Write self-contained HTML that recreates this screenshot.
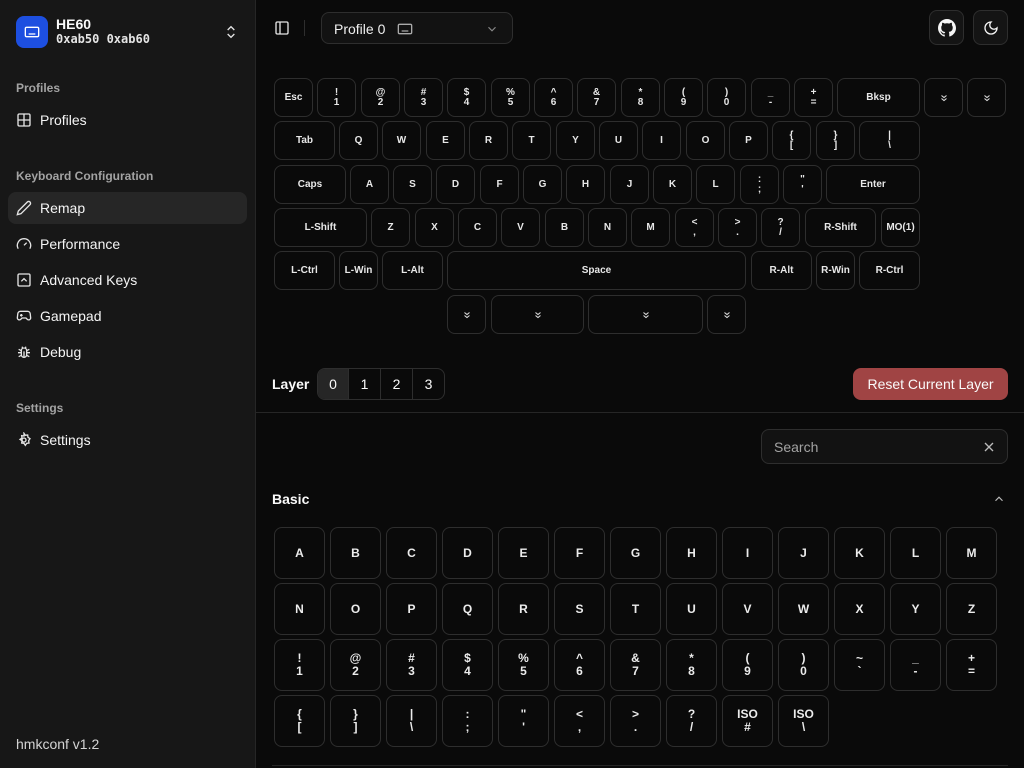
<!DOCTYPE html>
<html><head><meta charset="utf-8"><style>
*{box-sizing:border-box;margin:0;padding:0}
body{width:1024px;height:768px;overflow:hidden;background:#0a0a0a;font-family:"Liberation Sans",sans-serif;color:#fafafa;position:relative}
.sb{position:absolute;left:0;top:0;width:256px;height:768px;background:#171717;border-right:1px solid #262626}
.abs{position:absolute}
.lbl{position:absolute;left:16px;font-size:12px;color:#a3a3a3;font-weight:bold}
.item{position:absolute;left:8px;width:239px;height:32px;border-radius:8px;font-size:14px;display:flex;align-items:center;padding-left:32px;color:#f5f5f5}
.item svg{position:absolute;left:8px;top:8px}
.k{position:absolute;height:39px;border:1px solid #2e2e2e;border-radius:8px;display:flex;align-items:center;justify-content:center;text-align:center;font-size:10px;font-weight:bold;line-height:10px;color:#e8e8e8}
.g{position:absolute;left:274px;top:527px;display:grid;grid-template-columns:repeat(13,51px);grid-auto-rows:52px;gap:4px 5px}
.g div{border:1px solid #2e2e2e;border-radius:8px;display:flex;align-items:center;justify-content:center;text-align:center;font-size:12px;font-weight:bold;line-height:13px;color:#ececec}
</style></head><body>
<svg width="0" height="0" style="position:absolute"><defs><symbol id="dc" viewBox="0 0 10 10"><path d="M2.5 2.5l2.5 2 2.5-2M2.5 5.5l2.5 2 2.5-2" fill="none" stroke="#ddd" stroke-width="1.1"/></symbol></defs></svg>
<div class="sb">
 <div class="abs" style="left:16px;top:16px;width:32px;height:32px;border-radius:8px;background:#1d4fe0;display:flex;align-items:center;justify-content:center">
  <svg width="16" height="16" viewBox="0 0 24 24" fill="none" stroke="#fff" stroke-width="2"><rect x="2" y="5" width="20" height="14" rx="2"/><path d="M7 15h10M6 9h.01M10 9h.01M14 9h.01M18 9h.01"/></svg></div>
 <div class="abs" style="left:56px;top:16px;font-size:14px;font-weight:bold">HE60</div>
 <div class="abs" style="left:56px;top:32px;font-size:12px;font-family:'DejaVu Sans Mono',monospace;font-weight:bold;color:#e5e5e5">0xab50 0xab60</div>
 <svg class="abs" style="left:223px;top:24px" width="16" height="16" viewBox="0 0 24 24" fill="none" stroke="#e5e5e5" stroke-width="2"><path d="M7 15l5 5 5-5M7 9l5-5 5 5"/></svg>
 <div class="lbl" style="top:81px">Profiles</div>
 <div class="item" style="top:104px"><svg width="16" height="16" viewBox="0 0 24 24" fill="none" stroke="#e5e5e5" stroke-width="2"><rect x="3" y="3" width="18" height="18" rx="2"/><path d="M3 12h18M12 3v18"/></svg>Profiles</div>
 <div class="lbl" style="top:169px">Keyboard Configuration</div>
 <div class="item" style="top:192px;background:#262626"><svg width="16" height="16" viewBox="0 0 24 24" fill="none" stroke="#e5e5e5" stroke-width="2"><path d="M17 3a2.8 2.8 0 0 1 4 4L7.5 20.5 2 22l1.5-5.5z"/></svg>Remap</div>
 <div class="item" style="top:228px"><svg width="16" height="16" viewBox="0 0 24 24" fill="none" stroke="#e5e5e5" stroke-width="2"><path d="M12 14l4-4M3.3 19a10 10 0 1 1 17.4 0"/></svg>Performance</div>
 <div class="item" style="top:264px"><svg width="16" height="16" viewBox="0 0 24 24" fill="none" stroke="#e5e5e5" stroke-width="2"><rect x="3" y="3" width="18" height="18" rx="2"/><path d="M8 14l4-4 4 4"/></svg>Advanced Keys</div>
 <div class="item" style="top:300px"><svg width="16" height="16" viewBox="0 0 24 24" fill="none" stroke="#e5e5e5" stroke-width="2"><path d="M6 11h4M8 9v4M15 12h.01M18 10h.01"/><path d="M17.3 5H6.7a4 4 0 0 0-4 3.6L2 15a3 3 0 0 0 5 2l2-2h6l2 2a3 3 0 0 0 5-2l-.7-6.4A4 4 0 0 0 17.3 5z"/></svg>Gamepad</div>
 <div class="item" style="top:336px"><svg width="16" height="16" viewBox="0 0 24 24" fill="none" stroke="#e5e5e5" stroke-width="2"><rect x="8" y="6" width="8" height="14" rx="4"/><path d="M12 20v-9M9 4l1 2M15 4l-1 2M3 13h5M16 13h5M4 8l4 2M20 8l-4 2M4 19l4-2M20 19l-4-2"/></svg>Debug</div>
 <div class="lbl" style="top:401px">Settings</div>
 <div class="item" style="top:424px"><svg width="16" height="16" viewBox="0 0 24 24" fill="none" stroke="#e5e5e5" stroke-width="2"><circle cx="12" cy="12" r="3"/><path d="M12 2l2 3 3.5-.5.5 3.5 3 2-2 3 .5 3.5-3.5.5-2 3-2-3-3.5-.5.5-3.5-3-2 3-2-.5-3.5 3.5.5z"/></svg>Settings</div>
 <div class="abs" style="left:16px;top:736px;font-size:14px;color:#d4d4d4">hmkconf v1.2</div>
</div>

<svg class="abs" style="left:274px;top:20px" width="16" height="16" viewBox="0 0 24 24" fill="none" stroke="#e5e5e5" stroke-width="2"><rect x="3" y="3" width="18" height="18" rx="2"/><path d="M9 3v18"/></svg>
<div class="abs" style="left:304px;top:20px;width:1px;height:16px;background:#2e2e2e"></div>
<div class="abs" style="left:321px;top:12px;width:192px;height:32px;border:1px solid #2e2e2e;border-radius:8px;background:#121212;font-size:14px;padding:8px 12px;color:#f0f0f0">Profile 0
 <svg style="position:absolute;left:75px;top:8px" width="16" height="16" viewBox="0 0 24 24" fill="none" stroke="#aaa" stroke-width="2"><rect x="2" y="5" width="20" height="14" rx="2"/><path d="M7 15h10M6 9h.01M10 9h.01M14 9h.01M18 9h.01"/></svg>
 <svg style="position:absolute;left:163px;top:9px" width="14" height="14" viewBox="0 0 24 24" fill="none" stroke="#888" stroke-width="2"><path d="M6 9l6 6 6-6"/></svg></div>
<div class="abs" style="left:929px;top:10px;width:35px;height:35px;border:1px solid #2e2e2e;border-radius:8px;background:#141414;display:flex;align-items:center;justify-content:center"><svg width="18" height="18" viewBox="0 0 16 16" fill="#f5f5f5"><path d="M8 0C3.6 0 0 3.6 0 8c0 3.5 2.3 6.5 5.5 7.6.4.1.5-.2.5-.4v-1.4c-2.2.5-2.7-1-2.7-1-.4-.9-.9-1.2-.9-1.2-.7-.5.1-.5.1-.5.8.1 1.2.8 1.2.8.7 1.2 1.9.9 2.3.7.1-.5.3-.9.5-1.1-1.8-.2-3.600-.9-3.6-4 0-.9.3-1.6.8-2.1-.1-.2-.4-1 .1-2.1 0 0 .7-.2 2.2.8.6-.2 1.3-.3 2-.3s1.4.1 2 .3c1.5-1 2.200-.8 2.2-.8.4 1.1.2 1.9.1 2.1.5.6.8 1.300.8 2.1 0 3.1-1.9 3.7-3.6 3.9.3.3.5.8.5 1.5v2.2c0 .2.1.5.6.4C13.7 14.5 16 11.5 16 8c0-4.4-3.6-8-8-8z"/></svg></div>
<div class="abs" style="left:973px;top:10px;width:35px;height:35px;border:1px solid #2e2e2e;border-radius:8px;background:#141414;display:flex;align-items:center;justify-content:center"><svg width="16" height="16" viewBox="0 0 24 24" fill="none" stroke="#f5f5f5" stroke-width="2"><path d="M12 3a6 6 0 0 0 9 9 9 9 0 1 1-9-9z"/></svg></div>

<!-- keyboard -->
<div class="k" style="left:274px;top:78px;width:39px">Esc</div>
<div class="k" style="left:317px;top:78px;width:39px">!<br>1</div>
<div class="k" style="left:361px;top:78px;width:39px">@<br>2</div>
<div class="k" style="left:404px;top:78px;width:39px">#<br>3</div>
<div class="k" style="left:447px;top:78px;width:39px">$<br>4</div>
<div class="k" style="left:491px;top:78px;width:39px">%<br>5</div>
<div class="k" style="left:534px;top:78px;width:39px">^<br>6</div>
<div class="k" style="left:577px;top:78px;width:39px">&amp;<br>7</div>
<div class="k" style="left:621px;top:78px;width:39px">*<br>8</div>
<div class="k" style="left:664px;top:78px;width:39px">(<br>9</div>
<div class="k" style="left:707px;top:78px;width:39px">)<br>0</div>
<div class="k" style="left:751px;top:78px;width:39px">_<br>-</div>
<div class="k" style="left:794px;top:78px;width:39px">+<br>=</div>
<div class="k" style="left:837px;top:78px;width:83px">Bksp</div>
<div class="k" style="left:924px;top:78px;width:39px"><svg width="10" height="10"><use href="#dc"/></svg></div>
<div class="k" style="left:967px;top:78px;width:39px"><svg width="10" height="10"><use href="#dc"/></svg></div>

<div class="k" style="left:274px;top:121px;width:61px">Tab</div>
<div class="k" style="left:339px;top:121px;width:39px">Q</div>
<div class="k" style="left:382px;top:121px;width:39px">W</div>
<div class="k" style="left:426px;top:121px;width:39px">E</div>
<div class="k" style="left:469px;top:121px;width:39px">R</div>
<div class="k" style="left:512px;top:121px;width:39px">T</div>
<div class="k" style="left:556px;top:121px;width:39px">Y</div>
<div class="k" style="left:599px;top:121px;width:39px">U</div>
<div class="k" style="left:642px;top:121px;width:39px">I</div>
<div class="k" style="left:686px;top:121px;width:39px">O</div>
<div class="k" style="left:729px;top:121px;width:39px">P</div>
<div class="k" style="left:772px;top:121px;width:39px">{<br>[</div>
<div class="k" style="left:816px;top:121px;width:39px">}<br>]</div>
<div class="k" style="left:859px;top:121px;width:61px">|<br>\</div>

<div class="k" style="left:274px;top:165px;width:72px">Caps</div>
<div class="k" style="left:350px;top:165px;width:39px">A</div>
<div class="k" style="left:393px;top:165px;width:39px">S</div>
<div class="k" style="left:436px;top:165px;width:39px">D</div>
<div class="k" style="left:480px;top:165px;width:39px">F</div>
<div class="k" style="left:523px;top:165px;width:39px">G</div>
<div class="k" style="left:566px;top:165px;width:39px">H</div>
<div class="k" style="left:610px;top:165px;width:39px">J</div>
<div class="k" style="left:653px;top:165px;width:39px">K</div>
<div class="k" style="left:696px;top:165px;width:39px">L</div>
<div class="k" style="left:740px;top:165px;width:39px">:<br>;</div>
<div class="k" style="left:783px;top:165px;width:39px">"<br>'</div>
<div class="k" style="left:826px;top:165px;width:94px">Enter</div>

<div class="k" style="left:274px;top:208px;width:93px">L-Shift</div>
<div class="k" style="left:371px;top:208px;width:39px">Z</div>
<div class="k" style="left:415px;top:208px;width:39px">X</div>
<div class="k" style="left:458px;top:208px;width:39px">C</div>
<div class="k" style="left:501px;top:208px;width:39px">V</div>
<div class="k" style="left:545px;top:208px;width:39px">B</div>
<div class="k" style="left:588px;top:208px;width:39px">N</div>
<div class="k" style="left:631px;top:208px;width:39px">M</div>
<div class="k" style="left:675px;top:208px;width:39px">&lt;<br>,</div>
<div class="k" style="left:718px;top:208px;width:39px">&gt;<br>.</div>
<div class="k" style="left:761px;top:208px;width:39px">?<br>/</div>
<div class="k" style="left:805px;top:208px;width:71px">R-Shift</div>
<div class="k" style="left:881px;top:208px;width:39px">MO(1)</div>

<div class="k" style="left:274px;top:251px;width:61px">L-Ctrl</div>
<div class="k" style="left:339px;top:251px;width:39px">L-Win</div>
<div class="k" style="left:382px;top:251px;width:61px">L-Alt</div>
<div class="k" style="left:447px;top:251px;width:299px">Space</div>
<div class="k" style="left:751px;top:251px;width:61px">R-Alt</div>
<div class="k" style="left:816px;top:251px;width:39px">R-Win</div>
<div class="k" style="left:859px;top:251px;width:61px">R-Ctrl</div>

<div class="k" style="left:447px;top:295px;width:39px"><svg width="10" height="10"><use href="#dc"/></svg></div>
<div class="k" style="left:491px;top:295px;width:93px"><svg width="10" height="10"><use href="#dc"/></svg></div>
<div class="k" style="left:588px;top:295px;width:115px"><svg width="10" height="10"><use href="#dc"/></svg></div>
<div class="k" style="left:707px;top:295px;width:39px"><svg width="10" height="10"><use href="#dc"/></svg></div>

<div class="abs" style="left:272px;top:376px;font-size:14px;font-weight:bold">Layer</div>
<div class="abs" style="left:317px;top:368px;width:128px;height:32px;border:1px solid #2e2e2e;border-radius:8px;display:flex;overflow:hidden;font-size:14px">
 <div style="width:31px;background:#262626;border-right:1px solid #2e2e2e;display:flex;align-items:center;justify-content:center">0</div>
 <div style="width:32px;border-right:1px solid #2e2e2e;display:flex;align-items:center;justify-content:center">1</div>
 <div style="width:32px;border-right:1px solid #2e2e2e;display:flex;align-items:center;justify-content:center">2</div>
 <div style="width:31px;display:flex;align-items:center;justify-content:center">3</div></div>
<div class="abs" style="left:853px;top:368px;width:155px;height:32px;border-radius:8px;background:#a04444;font-size:14px;display:flex;align-items:center;justify-content:center">Reset Current Layer</div>
<div class="abs" style="left:256px;top:412px;width:768px;height:1px;background:#262626"></div>

<div class="abs" style="left:761px;top:429px;width:247px;height:35px;border:1px solid #2e2e2e;border-radius:8px;background:#121212;font-size:14px;color:#a3a3a3;padding:9px 12px">Search
 <svg style="position:absolute;right:10px;top:9px" width="16" height="16" viewBox="0 0 24 24" fill="none" stroke="#bbb" stroke-width="2"><path d="M6 6l12 12M18 6L6 18"/></svg></div>
<div class="abs" style="left:272px;top:491px;font-size:14px;font-weight:bold">Basic</div>
<svg class="abs" style="left:992px;top:492px" width="14" height="14" viewBox="0 0 24 24" fill="none" stroke="#bbb" stroke-width="2"><path d="M6 15l6-6 6 6"/></svg>

<div class="g">
<div>A</div><div>B</div><div>C</div><div>D</div><div>E</div><div>F</div><div>G</div><div>H</div><div>I</div><div>J</div><div>K</div><div>L</div><div>M</div>
<div>N</div><div>O</div><div>P</div><div>Q</div><div>R</div><div>S</div><div>T</div><div>U</div><div>V</div><div>W</div><div>X</div><div>Y</div><div>Z</div>
<div>!<br>1</div><div>@<br>2</div><div>#<br>3</div><div>$<br>4</div><div>%<br>5</div><div>^<br>6</div><div>&amp;<br>7</div><div>*<br>8</div><div>(<br>9</div><div>)<br>0</div><div>~<br>`</div><div>_<br>-</div><div>+<br>=</div>
<div>{<br>[</div><div>}<br>]</div><div>|<br>\</div><div>:<br>;</div><div>"<br>'</div><div>&lt;<br>,</div><div>&gt;<br>.</div><div>?<br>/</div><div>ISO<br>#</div><div>ISO<br>\</div>
</div>
<div class="abs" style="left:272px;top:765px;width:736px;height:1px;background:#262626"></div>
</body></html>
